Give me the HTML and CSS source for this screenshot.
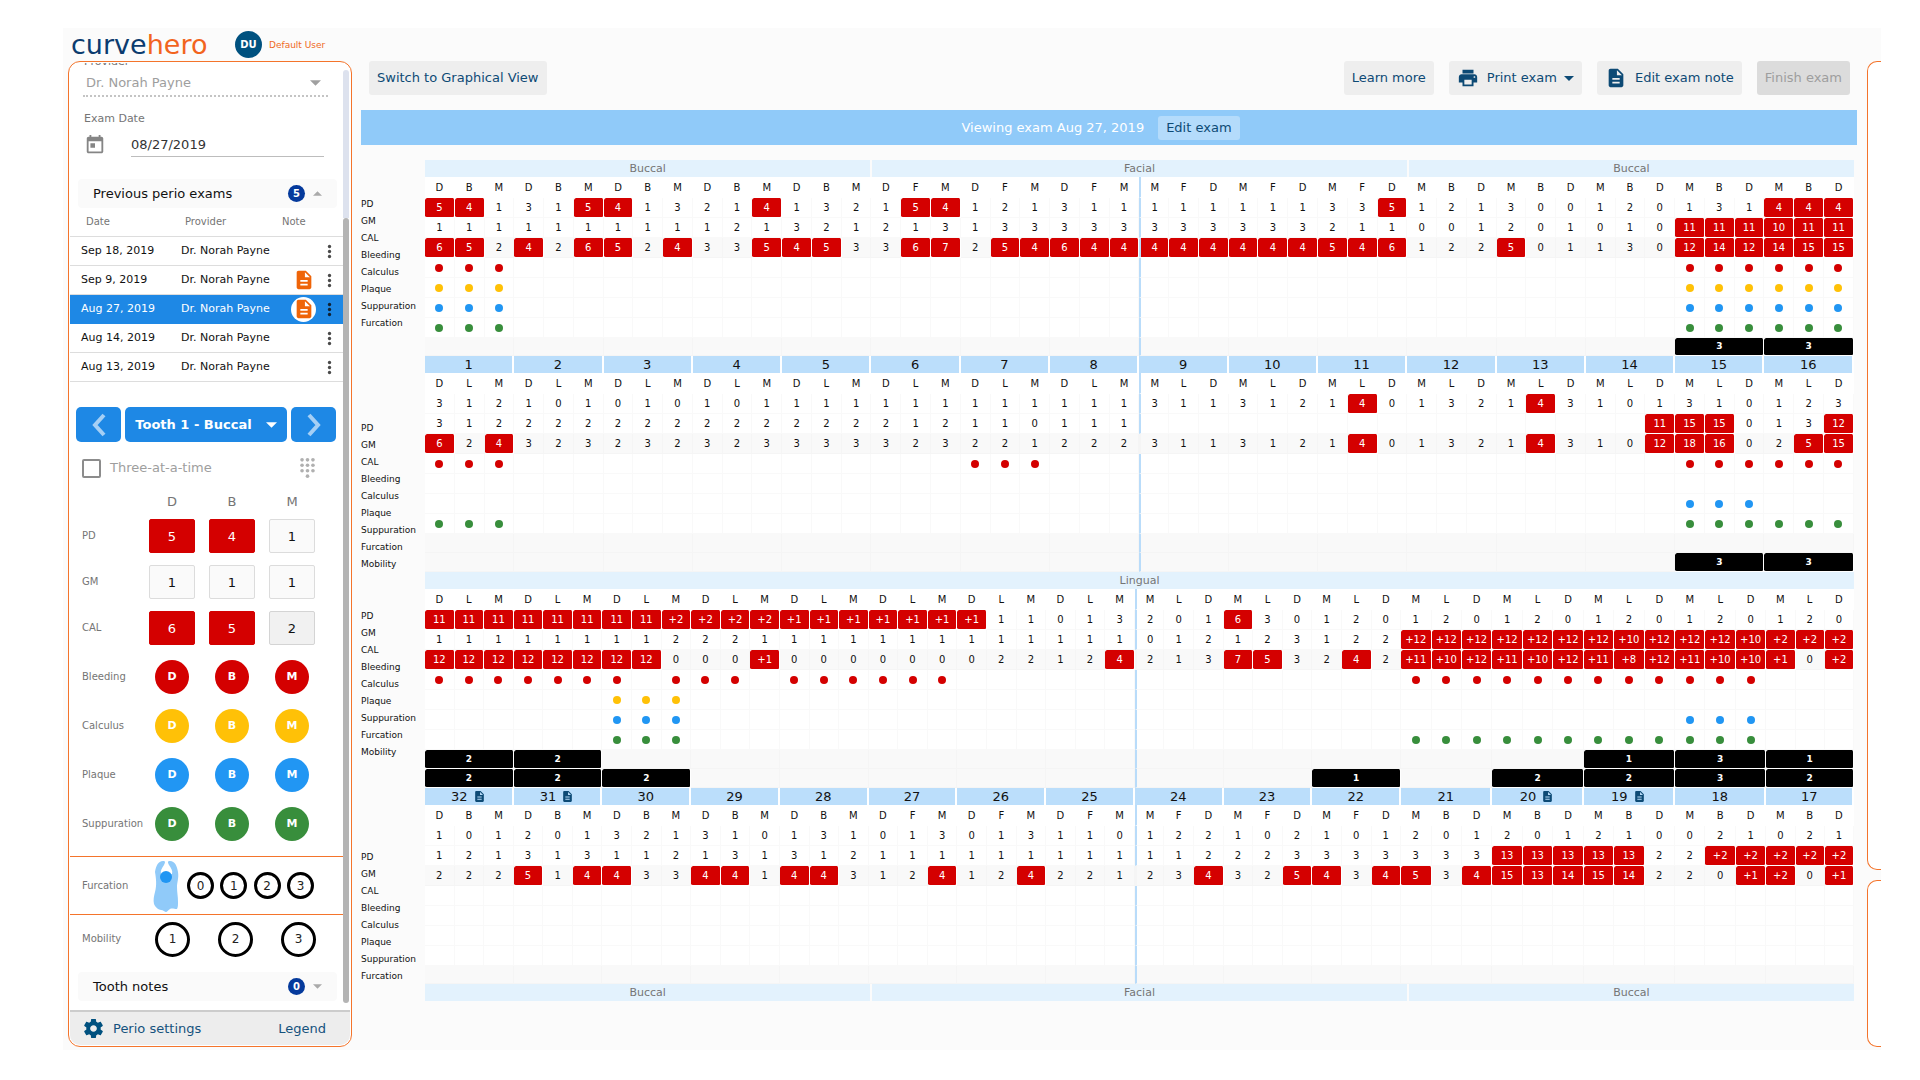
FILE: index.html
```html
<!DOCTYPE html>
<html lang="en">
<head>
<meta charset="utf-8">
<meta name="viewport" content="width=device-width, initial-scale=1">
<title>Curve Hero - Perio exam</title>
<link rel="stylesheet" href="styles.css">
</head>
<body>
<svg class="sprite" aria-hidden="true">
  <symbol id="i-print" viewBox="0 0 24 24"><path d="M19 8H5c-1.66 0-3 1.34-3 3v6h4v4h12v-4h4v-6c0-1.66-1.34-3-3-3zm-3 11H8v-5h8v5zm3-7c-.55 0-1-.45-1-1s.45-1 1-1 1 .45 1 1-.45 1-1 1zm-1-9H6v4h12V3z"/></symbol>
  <symbol id="i-note" viewBox="0 0 24 24"><path d="M14 2H6c-1.1 0-1.99.9-1.99 2L4 20c0 1.1.89 2 1.99 2H18c1.1 0 2-.9 2-2V8l-6-6zm2 16H8v-2h8v2zm0-4H8v-2h8v2zm-3-5V3.5L18.5 9H13z"/></symbol>
  <symbol id="i-today" viewBox="0 0 24 24"><path d="M19 3h-1V1h-2v2H8V1H6v2H5c-1.11 0-1.99.9-1.99 2L3 19c0 1.1.89 2 2 2h14c1.1 0 2-.9 2-2V5c0-1.1-.9-2-2-2zm0 16H5V8h14v11zM7 10h5v5H7z"/></symbol>
  <symbol id="i-gear" viewBox="0 0 24 24"><path d="M19.43 12.98c.04-.32.07-.64.07-.98s-.03-.66-.07-.98l2.11-1.65c.19-.15.24-.42.12-.64l-2-3.46c-.12-.22-.39-.3-.61-.22l-2.49 1c-.52-.4-1.08-.73-1.69-.98l-.38-2.65C14.46 2.18 14.25 2 14 2h-4c-.25 0-.46.18-.49.42l-.38 2.65c-.61.25-1.17.59-1.69.98l-2.49-1c-.23-.09-.49 0-.61.22l-2 3.46c-.13.22-.07.49.12.64l2.11 1.65c-.04.32-.07.65-.07.98s.03.66.07.98l-2.11 1.65c-.19.15-.24.42-.12.64l2 3.46c.12.22.39.3.61.22l2.49-1c.52.4 1.08.73 1.69.98l.38 2.65c.03.24.24.42.49.42h4c.25 0 .46-.18.49-.42l.38-2.65c.61-.25 1.17-.59 1.69-.98l2.49 1c.23.09.49 0 .61-.22l2-3.46c.12-.22.07-.49-.12-.64l-2.11-1.65zM12 15.5c-1.93 0-3.5-1.57-3.5-3.5s1.57-3.5 3.5-3.5 3.5 1.57 3.5 3.5-1.57 3.5-3.5 3.5z"/></symbol>
  <symbol id="i-more" viewBox="0 0 6 18"><circle cx="3" cy="3" r="2"/><circle cx="3" cy="9" r="2"/><circle cx="3" cy="15" r="2"/></symbol>
  <symbol id="i-down" viewBox="0 0 12 6"><path d="M0 0h12L6 6z"/></symbol>
  <symbol id="i-up" viewBox="0 0 12 6"><path d="M0 6h12L6 0z"/></symbol>
  <symbol id="i-keypad" viewBox="0 0 16 22"><circle cx="2" cy="2" r="2"/><circle cx="8" cy="2" r="2"/><circle cx="14" cy="2" r="2"/><circle cx="2" cy="8" r="2"/><circle cx="8" cy="8" r="2"/><circle cx="14" cy="8" r="2"/><circle cx="2" cy="14" r="2"/><circle cx="8" cy="14" r="2"/><circle cx="14" cy="14" r="2"/><circle cx="8" cy="20" r="2"/></symbol>
</svg>

<div class="app">
  <header class="topbar">
    <a class="logo" href="#">curve<span class="logo-hero">hero</span></a>
    <span class="avatar">DU</span>
    <a class="user" href="#">Default User</a>
  </header>

  <div class="columns">
    <aside class="sidebar">
      <div class="side-scroll">
        <div class="side-content">
          <div class="field">
            <label class="field-label field-label-first" for="provider">Provider</label>
            <div class="select-wrap">
              <select id="provider" class="provider" disabled><option>Dr. Norah Payne</option></select>
              <svg class="caret caret-lg"><use href="#i-down"/></svg>
            </div>
            <label class="field-label field-label-date" for="exam-date">Exam Date</label>
            <div class="date-row">
              <svg class="icon-today"><use href="#i-today"/></svg>
              <input id="exam-date" class="date-input" type="text" value="08/27/2019">
            </div>
          </div>

          <button class="fold fold-exams" type="button"><span>Previous perio exams</span><span class="badge">5</span><svg class="caret caret-sm"><use href="#i-up"/></svg></button>

          <table class="exams">
            <thead><tr><th class="c-date">Date</th><th class="c-prov">Provider</th><th class="c-note">Note</th><th class="c-more"></th></tr></thead>
            <tbody>
              <tr><td>Sep 18, 2019</td><td>Dr. Norah Payne</td><td></td><td><button class="more" type="button" aria-label="More"><svg><use href="#i-more"/></svg></button></td></tr>
              <tr><td>Sep 9, 2019</td><td>Dr. Norah Payne</td><td><span class="note"><svg><use href="#i-note"/></svg></span></td><td><button class="more" type="button" aria-label="More"><svg><use href="#i-more"/></svg></button></td></tr>
              <tr class="selected"><td>Aug 27, 2019</td><td>Dr. Norah Payne</td><td><span class="note"><svg><use href="#i-note"/></svg></span></td><td><button class="more" type="button" aria-label="More"><svg><use href="#i-more"/></svg></button></td></tr>
              <tr><td>Aug 14, 2019</td><td>Dr. Norah Payne</td><td></td><td><button class="more" type="button" aria-label="More"><svg><use href="#i-more"/></svg></button></td></tr>
              <tr><td>Aug 13, 2019</td><td>Dr. Norah Payne</td><td></td><td><button class="more" type="button" aria-label="More"><svg><use href="#i-more"/></svg></button></td></tr>
            </tbody>
          </table>

          <div class="tooth-nav">
            <button class="nav-btn nav-arrow" type="button" aria-label="Previous tooth"><svg viewBox="0 0 16 24"><path d="M13 2L4 12l9 10"/></svg></button>
            <button class="nav-btn nav-tooth" type="button"><span>Tooth 1 - Buccal</span><svg class="caret caret-lg"><use href="#i-down"/></svg></button>
            <button class="nav-btn nav-arrow" type="button" aria-label="Next tooth"><svg viewBox="0 0 16 24"><path d="M3 2l9 10-9 10"/></svg></button>
          </div>

          <div class="three">
            <label class="three-label"><input class="three-box" type="checkbox">Three-at-a-time</label>
            <svg class="keypad"><use href="#i-keypad"/></svg>
          </div>

          <div class="entry entry-head"><span></span><span>D</span><span>B</span><span>M</span></div>
          <div class="entry entry-values">
            <span class="row-label">PD</span>
            <input class="val high" aria-label="PD D" value="5"><input class="val high" aria-label="PD B" value="4"><input class="val" aria-label="PD M" value="1">
            <span class="row-label">GM</span>
            <input class="val" aria-label="GM D" value="1"><input class="val" aria-label="GM B" value="1"><input class="val" aria-label="GM M" value="1">
            <span class="row-label">CAL</span>
            <input class="val high" aria-label="CAL D" value="6" readonly><input class="val high" aria-label="CAL B" value="5" readonly><input class="val calc" aria-label="CAL M" value="2" readonly>
          </div>
          <div class="entry entry-marks">
            <span class="row-label">Bleeding</span>
            <button class="mark red" type="button">D</button><button class="mark red" type="button">B</button><button class="mark red" type="button">M</button>
            <span class="row-label">Calculus</span>
            <button class="mark yellow" type="button">D</button><button class="mark yellow" type="button">B</button><button class="mark yellow" type="button">M</button>
            <span class="row-label">Plaque</span>
            <button class="mark blue" type="button">D</button><button class="mark blue" type="button">B</button><button class="mark blue" type="button">M</button>
            <span class="row-label">Suppuration</span>
            <button class="mark green" type="button">D</button><button class="mark green" type="button">B</button><button class="mark green" type="button">M</button>
          </div>

          <div class="furcation">
            <span class="row-label">Furcation</span>
            <svg class="tooth" viewBox="0 0 26 52"><path fill="#90caf9" d="M2 12C3 6 5 1 10 1c3 0 2 2 1 4-2 3-4 6-3 9h11c1-3-1-6-3-9-1-2-2-4 1-4 5 0 7 5 8 11 1 6-1 10-1 15 0 6 1 9 1 15 0 3 0 5-1 7-3 0-5-1-7 0-2 1-3 3-4 3s-3-2-5-2-6-3-7-6c-1-4 0-8 1-12 2-7 1-14 0-20z"/><circle cx="13" cy="17" r="6" fill="#2196f3"/></svg>
            <div class="rings">
              <button class="ring ring-sm" type="button">0</button><button class="ring ring-sm" type="button">1</button><button class="ring ring-sm" type="button">2</button><button class="ring ring-sm" type="button">3</button>
            </div>
          </div>

          <div class="mobility">
            <span class="row-label">Mobility</span>
            <button class="ring" type="button">1</button><button class="ring" type="button">2</button><button class="ring" type="button">3</button>
          </div>

          <button class="fold fold-notes" type="button"><span>Tooth notes</span><span class="badge">0</span><svg class="caret caret-sm"><use href="#i-down"/></svg></button>
        </div>
        <div class="scrollbar"><div class="scroll-track"></div><div class="scroll-thumb"></div></div>
      </div>
      <footer class="side-foot">
        <a class="foot-link" href="#"><svg class="gear"><use href="#i-gear"/></svg>Perio settings</a>
        <a class="foot-link" href="#">Legend</a>
      </footer>
    </aside>

    <main class="main">
      <div class="toolbar">
        <button class="tool tool-switch" type="button">Switch to Graphical View</button>
        <button class="tool" type="button">Learn more</button>
        <button class="tool" type="button"><svg class="tool-icon"><use href="#i-print"/></svg>Print exam<svg class="tool-caret"><use href="#i-down"/></svg></button>
        <button class="tool" type="button"><svg class="tool-icon"><use href="#i-note"/></svg>Edit exam note</button>
        <button class="tool" type="button" disabled>Finish exam</button>
      </div>
      <div class="banner"><span>Viewing exam Aug 27, 2019</span><button class="banner-btn" type="button">Edit exam</button></div>

      <div class="chart">
        <div class="chart-labels">
          <ul><li>PD</li><li>GM</li><li>CAL</li><li>Bleeding</li><li>Calculus</li><li>Plaque</li><li>Suppuration</li><li>Furcation</li></ul>
          <ul><li>PD</li><li>GM</li><li>CAL</li><li>Bleeding</li><li>Calculus</li><li>Plaque</li><li>Suppuration</li><li>Furcation</li><li>Mobility</li></ul>
          <ul><li>PD</li><li>GM</li><li>CAL</li><li>Bleeding</li><li>Calculus</li><li>Plaque</li><li>Suppuration</li><li>Furcation</li><li>Mobility</li></ul>
          <ul><li>PD</li><li>GM</li><li>CAL</li><li>Bleeding</li><li>Calculus</li><li>Plaque</li><li>Suppuration</li><li>Furcation</li></ul>
        </div>
        <div class="chart-body">
          <div class="sections"><span>Buccal</span><span class="mid">Facial</span><span>Buccal</span></div>
          <table class="arch" id="upper" aria-label="Upper arch"></table>
          <div class="sections"><span>Lingual</span></div>
          <table class="arch" id="lower" aria-label="Lower arch"></table>
          <div class="sections"><span>Buccal</span><span class="mid">Facial</span><span>Buccal</span></div>
        </div>
      </div>
    </main>

    <div class="rail"><div class="rail-card rail-main"></div><div class="rail-card rail-foot"></div></div>
  </div>
</div>
<script src="chart.js"></script>
</body>
</html>
```
FILE: chart.js
```js
// One side of an arch: readings per tooth, marks as lists of site indexes (0-47).
const range = (a, b) => Array.from({ length: b - a + 1 }, (_, i) => a + i);
const read = s => s.split('|').flatMap(t => t.trim().split(/\s+/)).map(v => (v === '-' ? '' : v));

const upper = {
  teeth: range(1, 16),
  notes: [],
  outer: {
    pd: '5 4 1|3 1 5|4 1 3|2 1 4|1 3 2|1 5 4|1 2 1|3 1 1|1 1 1|1 1 1|3 3 5|1 2 1|3 0 0|1 2 0|1 3 1|4 4 4',
    gm: '1 1 1|1 1 1|1 1 1|1 2 1|3 2 1|2 1 3|1 3 3|3 3 3|3 3 3|3 3 3|2 1 1|0 0 1|2 0 1|0 1 0|11 11 11|10 11 11',
    cal: '6 5 2|4 2 6|5 2 4|3 3 5|4 5 3|3 6 7|2 5 4|6 4 4|4 4 4|4 4 4|5 4 6|1 2 2|5 0 1|1 3 0|12 14 12|14 15 15',
    red: [...range(0, 2), ...range(42, 47)],
    yellow: [...range(0, 2), ...range(42, 47)],
    blue: [...range(0, 2), ...range(42, 47)],
    green: [...range(0, 2), ...range(42, 47)],
    wide: [{ 15: 3, 16: 3 }]
  },
  inner: {
    pd: '3 1 2|1 0 1|0 1 0|1 0 1|1 1 1|1 1 1|1 1 1|1 1 1|3 1 1|3 1 2|1 4 0|1 3 2|1 4 3|1 0 1|3 1 0|1 2 3',
    gm: '3 1 2|2 2 2|2 2 2|2 2 2|2 2 2|2 1 2|1 1 0|1 1 1|- - -|- - -|- - -|- - -|- - -|- - 11|15 15 0|1 3 12',
    cal: '6 2 4|3 2 3|2 3 2|3 2 3|3 3 3|3 2 3|2 2 1|2 2 2|3 1 1|3 1 2|1 4 0|1 3 2|1 4 3|1 0 12|18 16 0|2 5 15',
    red: [...range(0, 2), ...range(18, 20), ...range(42, 47)],
    yellow: [],
    blue: range(42, 44),
    green: [...range(0, 2), ...range(42, 47)],
    wide: [{}, { 15: 3, 16: 3 }]
  }
};

const lower = {
  teeth: range(17, 32).reverse(),
  notes: [32, 31, 20, 19],
  inner: {
    pd: '11 11 11|11 11 11|11 11 +2|+2 +2 +2|+1 +1 +1|+1 +1 +1|+1 1 1|0 1 3|2 0 1|6 3 0|1 2 0|1 2 0|1 2 0|1 2 0|1 2 0|1 2 0',
    gm: '1 1 1|1 1 1|1 1 2|2 2 1|1 1 1|1 1 1|1 1 1|1 1 1|0 1 2|1 2 3|1 2 2|+12 +12 +12|+12 +12 +12|+12 +10 +12|+12 +12 +10|+2 +2 +2',
    cal: '12 12 12|12 12 12|12 12 0|0 0 +1|0 0 0|0 0 0|0 2 2|1 2 4|2 1 3|7 5 3|2 4 2|+11 +10 +12|+11 +10 +12|+11 +8 +12|+11 +10 +10|+1 0 +2',
    red: [...range(0, 6), ...range(8, 10), ...range(12, 17), ...range(33, 44)],
    yellow: range(6, 8),
    blue: [...range(6, 8), ...range(42, 44)],
    green: [...range(6, 8), ...range(33, 44)],
    wide: [{ 32: 2, 31: 2, 19: 1, 18: 3, 17: 1 }, { 32: 2, 31: 2, 30: 2, 22: 1, 20: 2, 19: 2, 18: 3, 17: 2 }]
  },
  outer: {
    pd: '1 0 1|2 0 1|3 2 1|3 1 0|1 3 1|0 1 3|0 1 3|1 1 0|1 2 2|1 0 2|1 0 1|2 0 1|2 0 1|2 1 0|0 2 1|0 2 1',
    gm: '1 2 1|3 1 3|1 1 2|1 3 1|3 1 2|1 1 1|1 1 1|1 1 1|1 1 2|2 2 3|3 3 3|3 3 3|13 13 13|13 13 2|2 +2 +2|+2 +2 +2',
    cal: '2 2 2|5 1 4|4 3 3|4 4 1|4 4 3|1 2 4|1 2 4|2 2 1|2 3 4|3 2 5|4 3 4|5 3 4|15 13 14|15 14 2|2 0 +1|+2 0 +1',
    red: [], yellow: [], blue: [], green: [],
    wide: [{}]
  }
};

const cells = (cls, fn) =>
  `<tr class="${cls}">${range(0, 47).map(i => fn(i, i === 24 ? ' midline' : '')).join('')}</tr>`;

function sideRows(arch, side, inner) {
  let html = cells('sites', (i, m) => {
    const t = Math.floor(i / 3);
    const middle = inner ? 'L' : t > 4 && t < 11 ? 'F' : 'B';
    const letters = t < 8 ? ['D', middle, 'M'] : ['M', middle, 'D'];
    return `<th class="site${m}">${letters[i % 3]}</th>`;
  });
  for (const key of ['pd', 'gm', 'cal']) {
    const v = read(side[key]);
    html += cells(`reading ${key}`, (i, m) => {
      const high = v[i].startsWith('+') || Number(v[i]) >= 4;
      return `<td class="${high ? 'high' : 'low'}${m}">${v[i]}</td>`;
    });
  }
  for (const color of ['red', 'yellow', 'blue', 'green']) {
    html += cells('dots', (i, m) =>
      `<td class="low${m}">${side[color].includes(i) ? `<span class="dot ${color}"></span>` : ''}</td>`);
  }
  for (const row of side.wide) {
    html += `<tr class="wide${side.wide.length === 1 ? ' single' : ''}">${arch.teeth.map((t, i) =>
      `<td colspan="3" class="${row[t] ? 'graded' : 'blank'}${i === 8 ? ' midline' : ''}">${row[t] || ''}</td>`).join('')}</tr>`;
  }
  return html;
}

function numberRow(arch) {
  return `<tr class="numbers">${arch.teeth.map((t, i) =>
    `<th colspan="3" class="${i === 8 ? 'midline' : ''}">${t}${arch.notes.includes(t) ? '<svg class="tooth-note"><use href="#i-note"/></svg>' : ''}</th>`).join('')}</tr>`;
}

const cols = arch => `<colgroup>${arch.teeth.map(t =>
  `<col class="${t >= 18 && t <= 21 ? 'col-wide' : t > 21 ? 'col-narrow' : 'col'}" span="3">`).join('')}</colgroup>`;

document.getElementById('upper').innerHTML =
  cols(upper) + `<tbody>${sideRows(upper, upper.outer, false)}${numberRow(upper)}${sideRows(upper, upper.inner, true)}</tbody>`;
document.getElementById('lower').innerHTML =
  cols(lower) + `<tbody>${sideRows(lower, lower.inner, true)}${numberRow(lower)}${sideRows(lower, lower.outer, false)}</tbody>`;
```
FILE: styles.css
```css
* { box-sizing: border-box; }

body {
  margin: 0;
  padding: 28px 39px 30px 63px;
  background: #fff;
  color: #111;
  font: 13px/18px "DejaVu Sans", Verdana, sans-serif;
}
button, input, select { font: inherit; color: inherit; margin: 0; padding: 0; border: 0; background: none; border-radius: 0; }
button { cursor: pointer; }
a { color: inherit; text-decoration: none; }
svg { display: block; fill: currentColor; flex: none; }
.sprite { position: absolute; width: 0; height: 0; }

.app { background: #fbfbfb; padding: 0 0 3px 5px; }

/* Top bar */
.topbar { display: flex; align-items: center; height: 33px; padding-left: 3px; }
.logo { width: 164px; font-size: 27px; line-height: 27px; color: #0b3c6f; }
.logo-hero { color: #f2641e; }
.avatar { width: 27px; height: 27px; border-radius: 50%; background: #00517f; color: #fff; font-size: 10px; font-weight: bold; line-height: 27px; text-align: center; }
.user { margin-left: 7px; font-size: 9px; color: #ef6a1e; }

.columns { display: grid; grid-template-columns: 284px minmax(0, 1fr) 14px; }

/* Sidebar */
.sidebar { display: flex; flex-direction: column; padding: 1px; border: 1px solid #f4742b; border-radius: 12px; overflow: hidden; background: #fff; }
.side-scroll { display: flex; flex: 1; overflow: hidden; }
.side-content { flex: 1; padding-bottom: 9px; }
.scrollbar { display: flex; flex-direction: column; width: 6px; margin: 7px 1px 7px 0; }
.scroll-track { height: 148px; background: #dde2ee; border-radius: 3px 3px 0 0; }
.scroll-thumb { flex: 1; background: #b4b4b4; border-radius: 3px; }

.field { padding: 0 15px 0 13px; margin-top: -8px; }
.field-label { display: block; padding-left: 1px; font-size: 11px; line-height: 14px; color: #757575; }
.field-label-date { margin-top: 15px; }
.select-wrap { display: flex; align-items: center; height: 28px; padding: 2px 7px 0 3px; border-bottom: 2px dotted #c4c4c4; }
.provider { flex: 1; appearance: none; color: #9e9e9e; opacity: 1; }
.caret-lg { width: 11px; height: 6px; }
.caret-sm { width: 9px; height: 5px; color: #aaa; }
.select-wrap .caret-lg { color: #a0a0a0; }
.date-row { display: flex; align-items: center; margin: 6px 4px 0 1px; height: 25px; }
.icon-today { width: 22px; height: 22px; color: #858585; }
.date-input { flex: 1; min-width: 0; height: 25px; margin-left: 25px; border-bottom: 1px solid #bdbdbd; color: #333; }

.fold { display: flex; align-items: center; width: 259px; height: 29px; margin-left: 8px; padding: 0 15px; background: #fafafa; border-radius: 4px; text-align: left; }
.fold-exams { margin-top: 22px; }
.fold-notes { margin-top: 16px; }
.badge { width: 17px; height: 17px; margin: 0 8px 0 auto; border-radius: 50%; background: #053a9c; color: #fff; font-size: 10px; font-weight: bold; line-height: 17px; text-align: center; }

.exams { width: 273px; table-layout: fixed; border-collapse: separate; border-spacing: 0; }
.exams th, .exams td { height: 29px; padding: 0; border-bottom: 1px solid #ddd; text-align: left; font-size: 11px; line-height: 14px; white-space: nowrap; }
.exams th { font-size: 10px; font-weight: normal; color: #757575; }
.exams td:first-child { padding-left: 11px; }
.exams .c-date { width: 111px; padding-left: 16px; }
.exams .c-prov { width: 101px; padding-left: 4px; }
.exams .c-note { width: 39px; }
.exams .selected td { background: #1e88e5; border-color: #1e88e5; color: #fff; }
.note { display: flex; align-items: center; justify-content: center; width: 25px; height: 25px; margin-left: 9px; border-radius: 50%; color: #ef6408; }
.note svg { width: 22px; height: 22px; }
.selected .note { background: #fff; }
.more { display: flex; margin-left: 6px; color: #4a4a4a; }
.selected .more { color: #123; }
.more svg { width: 5px; height: 15px; }

.tooth-nav { display: flex; gap: 4px; margin: 25px 7px 0 6px; }
.nav-btn { display: flex; align-items: center; justify-content: center; height: 35px; border-radius: 5px; background: #1e88e5; color: #fff; font-weight: bold; }
.nav-arrow { width: 45px; }
.nav-arrow svg { width: 16px; height: 24px; fill: none; stroke: #a5cff5; stroke-width: 4; }
.nav-tooth { flex: 1; gap: 14px; }

.three { display: flex; align-items: center; justify-content: space-between; height: 20px; margin: 16px 28px 0 12px; }
.three-label { display: flex; align-items: center; color: #9e9e9e; }
.three-box { appearance: none; width: 19px; height: 19px; margin-right: 9px; border: 2px solid #8c8c8c; border-radius: 2px; }
.keypad { width: 15px; height: 20px; color: #b0b0b0; }

.entry { display: grid; grid-template-columns: 53px repeat(3, 46px); column-gap: 14px; margin-left: 12px; justify-content: start; align-items: center; }
.entry > :nth-child(4n + 1) { margin-right: -14px; }
.entry-head { margin-top: 15px; color: #757575; text-align: center; }
.entry-values { row-gap: 12px; margin-top: 8px; }
.row-label { font-size: 10px; color: #757575; }
.val { width: 46px; height: 34px; border: 1px solid #dcdcdc; border-radius: 2px; background: #fafafa; text-align: center; }
.val.calc { background: #f1f1f1; border-color: #d4d4d4; }
.val.high { background: #d40000; border-color: #d40000; color: #fff; }
.entry-marks { row-gap: 15px; margin-top: 15px; }
.mark { justify-self: center; width: 34px; height: 34px; border-radius: 50%; color: #fff; font-size: 11px; font-weight: bold; }
.red { background: #d40000; }
.yellow { background: #ffc107; }
.blue { background: #2196f3; }
.green { background: #388e3c; }

.furcation { display: flex; align-items: center; height: 59px; margin-top: 15px; padding: 0 29px 0 12px; border: solid #f4742b; border-width: 1px 0; }
.furcation .row-label { width: 71px; }
.tooth { width: 26px; height: 52px; }
.rings { display: flex; justify-content: space-between; flex: 1; margin-left: 8px; }
.ring { width: 35px; height: 35px; border: 3px solid #000; border-radius: 50%; background: #fff; color: #222; font-size: 12px; line-height: 28px; text-align: center; }
.ring-sm { width: 27px; height: 27px; line-height: 20px; }
.mobility { display: flex; align-items: center; gap: 28px; height: 34px; margin-top: 7px; padding-left: 12px; }
.mobility .row-label { width: 45px; }

.side-foot { display: flex; align-items: center; justify-content: space-between; height: 35px; padding: 0 24px 0 12px; border-top: 2px solid #ccc; border-radius: 0 0 10px 10px; background: #ededed; color: #15527d; }
.foot-link { display: flex; align-items: center; gap: 8px; }
.gear { width: 23px; height: 23px; color: #00517f; }

/* Main area */
.main { margin: 0 10px 0 9px; }
.toolbar { display: flex; gap: 15px; padding: 0 7px 0 8px; }
.tool { display: flex; align-items: center; height: 34px; padding: 0 8px; border-radius: 3px; background: #eee; color: #0d4a75; white-space: nowrap; }
.tool-switch { margin-right: auto; }
.tool-icon { width: 22px; height: 22px; margin-right: 8px; }
.tool-caret { width: 10px; height: 5px; margin-left: 7px; }
.tool:disabled { background: #dcdcdc; color: #9e9e9e; }
.banner { display: flex; align-items: center; justify-content: center; gap: 14px; height: 35px; margin-top: 15px; padding-right: 17px; background: #90caf9; color: #fff; }
.banner-btn { height: 24px; padding: 0 8px; border-radius: 3px; background: #b4dbfb; color: #0d4a75; }

/* Perio chart */
.chart { display: flex; margin-top: 15px; padding-right: 3px; }
.chart-labels { width: 64px; font-size: 9px; line-height: 17px; }
.chart-labels ul { list-style: none; margin: 36px 0 0; padding: 0; }
.chart-labels ul + ul { margin-top: 35px; }
.chart-labels ul:nth-child(even) { margin-top: 88px; }
.chart-labels ul:last-child { margin-top: 88px; }
.chart-body { flex: 1; min-width: 0; }
.sections { display: flex; gap: 2px; height: 17px; color: #757575; font-size: 11px; line-height: 17px; text-align: center; }
.sections span { flex: 5; background: #e3f2fd; }
.sections .mid { flex: 6; }

.arch { width: 100%; table-layout: fixed; border-collapse: separate; border-spacing: 0; background: #fff; }
.col-narrow { width: 2.07%; }
.col-wide { width: 2.13%; }
.arch th, .arch td { height: 20px; padding: 0; border: solid transparent; border-width: 0 1px 1px 0; background-clip: padding-box; text-align: center; vertical-align: middle; font-size: 10px; font-weight: normal; line-height: 17px; white-space: nowrap; }
.arch .sites th { height: 21px; }
.arch .low { border-color: #f9f9f9; }
.arch .cal .low, .arch .blank { background-color: #f9f9f9; border-color: #f5f5f5; }
.arch .high { background-color: #d40000; border-radius: 2px; color: #fff; }
.arch .graded { background-color: #000; border-radius: 2px; color: #fff; font-size: 9px; font-weight: bold; }
.arch .wide td { height: 19px; }
.arch .single td { height: 18px; }
.arch .numbers th { height: 17px; border-width: 0 2px 0 0; border-color: #fff; background-color: #bbdefb; font-size: 13px; line-height: 17px; }
.arch .midline { border-left: 2px solid #b9dcfa; }
.dot { display: block; width: 8px; height: 8px; margin: 0 auto; border-radius: 50%; }
.tooth-note { display: inline-block; width: 13px; height: 13px; margin-left: 5px; vertical-align: -2px; color: #0d4a75; }

/* Right rail */
.rail { display: flex; flex-direction: column; gap: 10px; }
.rail-card { border: 1px solid #f4742b; border-right: 0; border-radius: 10px 0 0 10px; background: #fff; }
.rail-main { flex: 1; }
.rail-foot { height: 167px; }
```
